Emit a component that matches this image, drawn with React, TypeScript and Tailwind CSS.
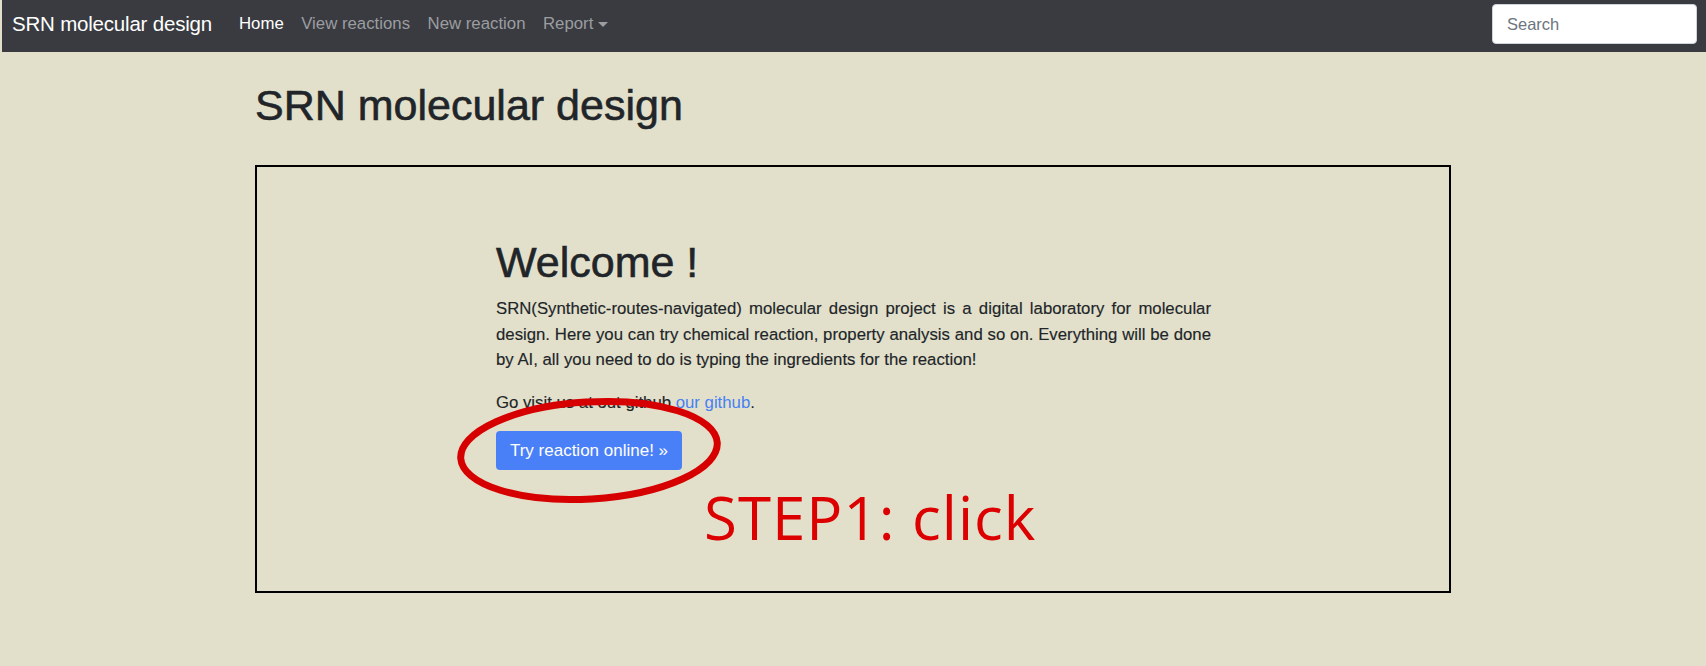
import React from "react";

export default function App() {
  return (
    <div
      className="min-h-[666px] w-full bg-[#e2e0ca] text-[#212529]"
      style={{ fontFamily: '"Liberation Sans", Arial, sans-serif' }}
    >
      {/* Navbar */}
      <nav className="ml-[2px] flex h-[52px] items-center bg-[#393b40] pb-[4px] pl-[10px] pr-[9px]">
        <span className="text-[20.5px] tracking-[-0.2px] text-white">SRN molecular design</span>
        <ul className="ml-[27px] flex items-center gap-[17.5px] text-[16.8px]">
          <li className="text-white">Home</li>
          <li className="text-[#9c9da0]">View reactions</li>
          <li className="text-[#9c9da0]">New reaction</li>
          <li className="flex items-center text-[#9c9da0]">
            Report
            <span className="ml-[5px] mt-[1px] inline-block h-0 w-0 border-x-[5px] border-t-[5px] border-x-transparent border-t-[#9c9da0]" />
          </li>
        </ul>
        <div className="ml-auto">
          <input
            type="text"
            placeholder="Search"
            className="h-[40px] w-[205px] rounded-[4px] border border-[#ced4da] bg-white px-[14px] text-[16.5px] text-[#495057] placeholder:text-[#6c757d] outline-none"
          />
        </div>
      </nav>

      {/* Main container */}
      <main className="mx-auto w-[1196px]">
        <h1 className="mt-[28px] text-[43px] leading-[51.6px] font-medium [-webkit-text-stroke:0.6px_#212529]">
          SRN molecular design
        </h1>

        <section className="relative mt-[33px] h-[428px] border-2 border-black">
          <div className="pl-[239px] pt-[70px]">
            <h2 className="mb-[8px] text-[43px] leading-[51.6px] font-medium [-webkit-text-stroke:0.6px_#212529]">
              Welcome !
            </h2>
            <p className="mb-[17px] w-[715px] text-justify text-[16.75px] leading-[25.5px] [-webkit-text-stroke:0.15px_#212529]">
              SRN(Synthetic-routes-navigated) molecular design project is a digital laboratory for molecular
              design. Here you can try chemical reaction, property analysis and so on. Everything will be done
              by AI, all you need to do is typing the ingredients for the reaction!
            </p>
            <p className="mb-[15.6px] text-[16.75px] leading-[25.5px]">
              <span className="[-webkit-text-stroke:0.15px_#212529]">Go visit us at out github </span>
              <a className="text-[#4680f4]">our github</a>.
            </p>
            <button className="flex h-[39px] w-[186px] items-center justify-center rounded-[4px] bg-[#4a80f7] text-[17px] text-white">
              Try reaction online! »
            </button>
          </div>

          {/* Annotation overlay */}
          <svg
            className="pointer-events-none absolute left-0 top-0"
            width="1192"
            height="424"
            viewBox="0 0 1192 424"
          >
            <ellipse
              cx="332"
              cy="283.5"
              rx="128.5"
              ry="48.5"
              fill="none"
              stroke="#d70000"
              strokeWidth="7"
              transform="rotate(-3.5 332 283.5)"
            />
          </svg>
          <div
            className="pointer-events-none absolute left-[447px] top-[320px] text-[60px] leading-none tracking-[1px] text-[#dc0000]"
            style={{ fontFamily: '"Open Sans", "Noto Sans", sans-serif' }}
          >
            STEP1: click
          </div>
        </section>
      </main>
    </div>
  );
}
